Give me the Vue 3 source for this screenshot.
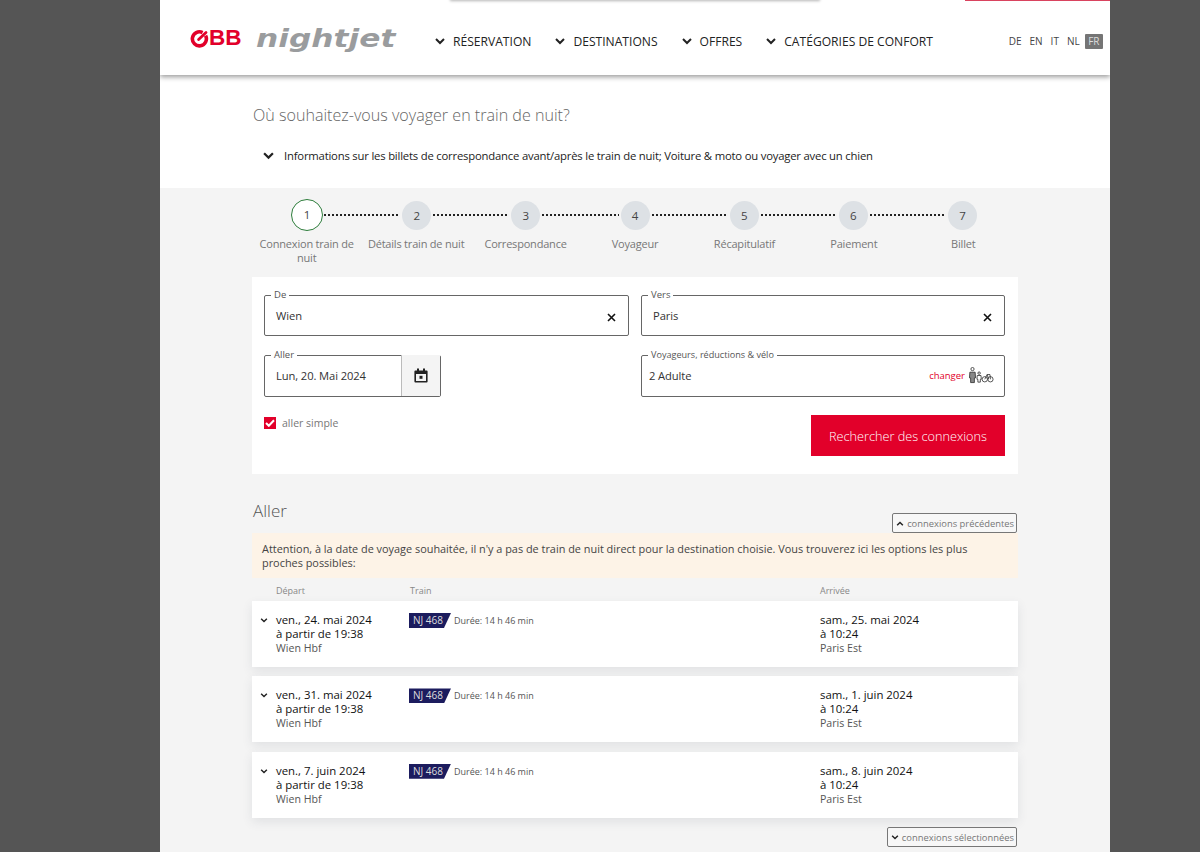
<template>
  <div class="page">
    <div class="top-sliver-grey"></div>
    <div class="top-sliver-red"></div>
    <header class="header">
      <div class="logo-obb">
        <svg width="19" height="19" viewBox="0 0 19 19">
          <path d="M12.6 3.6A7 7 0 1 0 15.6 6.6" fill="none" stroke="#e2002a" stroke-width="3.6" />
          <path d="M8.6 10.6 L16 3.4" stroke="#e2002a" stroke-width="2.8" stroke-linecap="round" />
        </svg>
        <span>BB</span>
      </div>
      <div class="logo-nightjet"><span>nightjet</span></div>
      <nav class="nav">
        <a v-for="item in navItems" :key="item" class="nav-item">
          <svg class="chev" width="10" height="7" viewBox="0 0 10 7"><path d="M1 1l4 4 4-4" /></svg>
          {{ item }}
        </a>
      </nav>
      <div class="langs">
        <span v-for="l in langs" :key="l" class="lang" :class="{ active: l === 'FR' }">{{ l }}</span>
      </div>
    </header>

    <section class="intro">
      <h2 class="intro-title">Où souhaitez-vous voyager en train de nuit?</h2>
      <div class="intro-info">
        <svg class="chev" width="11" height="8" viewBox="0 0 10 7"><path d="M1 1l4 4 4-4" /></svg>
        <span>Informations sur les billets de correspondance avant/après le train de nuit; Voiture &amp; moto ou voyager avec un chien</span>
      </div>
    </section>

    <main class="content">
      <div class="stepper">
        <div class="step-track">
          <template v-for="(step, i) in steps" :key="step">
            <span class="circle" :class="{ current: i === 0 }">{{ i + 1 }}</span>
            <span v-if="i < steps.length - 1" class="dots"></span>
          </template>
        </div>
        <div class="step-labels">
          <div v-for="step in steps" :key="step" class="step-label">{{ step }}</div>
        </div>
      </div>

      <form class="search" @submit.prevent>
        <div class="search-row">
          <fieldset class="field wide">
            <legend>De</legend>
            <span class="value">Wien</span>
            <svg class="x" width="9" height="9" viewBox="0 0 9 9"><path d="M1 1l7 7M8 1L1 8" /></svg>
          </fieldset>
          <fieldset class="field wide">
            <legend>Vers</legend>
            <span class="value">Paris</span>
            <svg class="x" width="9" height="9" viewBox="0 0 9 9"><path d="M1 1l7 7M8 1L1 8" /></svg>
          </fieldset>
        </div>
        <div class="search-row second">
          <fieldset class="field date">
            <legend>Aller</legend>
            <span class="value">Lun, 20. Mai 2024</span>
            <span class="cal">
              <svg width="14" height="15" viewBox="0 0 14 15">
                <path d="M3 0.5h2v2h4v-2h2v2h1.6a1 1 0 0 1 1 1v10a1 1 0 0 1-1 1H1.4a1 1 0 0 1-1-1v-10a1 1 0 0 1 1-1H3z M2 6v7h10V6z" fill="#222" fill-rule="evenodd" />
                <rect x="5.5" y="7.8" width="3" height="3" fill="#222" />
              </svg>
            </span>
          </fieldset>
          <fieldset class="field wide travellers">
            <legend>Voyageurs, réductions &amp; vélo</legend>
            <span class="value">2 Adulte</span>
            <span class="change">changer</span>
            <svg class="people" width="26" height="17" viewBox="0 0 26 18" fill="none" stroke="#222" stroke-width="0.8">
              <circle cx="4" cy="2.2" r="1.7" />
              <path d="M1.2 5.5h5.6l.4 6H6v5H2v-5H.8z" fill="#888" />
              <circle cx="11" cy="6.5" r="1.3" />
              <path d="M9 9h4l.3 4h-1v3h-2.600v-3h-1z" />
              <circle cx="17" cy="13" r="2.800" />
              <circle cx="23" cy="13" r="2.800" />
              <path d="M17 13l2.500-5h3l.5 5M19.500 8l1.500 5" />
            </svg>
          </fieldset>
        </div>
        <div class="search-bottom">
          <label class="oneway">
            <span class="checkbox">
              <svg width="10" height="8" viewBox="0 0 10 8"><path d="M1 4l2.800 2.800L9 1.200" fill="none" stroke="#fff" stroke-width="2" /></svg>
            </span>
            aller simple
          </label>
          <button class="search-btn" type="submit">Rechercher des connexions</button>
        </div>
      </form>

      <div class="results-head">
        <h3>Aller</h3>
        <button class="more-btn" type="button">
          <svg class="chev" width="8" height="5" viewBox="0 0 10 7"><path d="M1 6l4-4 4 4" /></svg>
          connexions précédentes
        </button>
      </div>
      <div class="notice">
        Attention, à la date de voyage souhaitée, il n'y a pas de train de nuit direct pour la destination choisie. Vous trouverez ici les options les plus proches possibles:
      </div>

      <div class="cols cols-head">
        <span></span>
        <span>Départ</span>
        <span>Train</span>
        <span>Arrivée</span>
      </div>
      <div v-for="c in connections" :key="c.dep" class="cols conn">
        <svg class="chev conn-chev" width="8" height="5" viewBox="0 0 10 7"><path d="M1 1l4 4 4-4" /></svg>
        <div class="times">
          <div>{{ c.dep }}</div>
          <div>à partir de 19:38</div>
          <div class="station">Wien Hbf</div>
        </div>
        <div class="train">
          <span class="badge">NJ 468</span>
          <span class="duration">Durée: 14 h 46 min</span>
        </div>
        <div class="times">
          <div>{{ c.arr }}</div>
          <div>à 10:24</div>
          <div class="station">Paris Est</div>
        </div>
      </div>

      <div class="foot">
        <button class="more-btn" type="button">
          <svg class="chev" width="8" height="5" viewBox="0 0 10 7"><path d="M1 1l4 4 4-4" /></svg>
          connexions sélectionnées
        </button>
      </div>
    </main>
  </div>
</template>

<script setup>
const navItems = ["RÉSERVATION", "DESTINATIONS", "OFFRES", "CATÉGORIES DE CONFORT"];
const langs = ["DE", "EN", "IT", "NL", "FR"];
const steps = [
  "Connexion train de nuit",
  "Détails train de nuit",
  "Correspondance",
  "Voyageur",
  "Récapitulatif",
  "Paiement",
  "Billet",
];
const connections = [
  { dep: "ven., 24. mai 2024", arr: "sam., 25. mai 2024" },
  { dep: "ven., 31. mai 2024", arr: "sam., 1. juin 2024" },
  { dep: "ven., 7. juin 2024", arr: "sam., 8. juin 2024" },
];
</script>

<style>
html, body {
  background: #555;
  overflow: hidden;
}
</style>

<style scoped>
.page {
  position: relative;
  width: 950px;
  height: 852px;
  margin-left: 160px;
  background: #fff;
  font-family: "Open Sans", "Liberation Sans", sans-serif;
  color: #222;
  overflow: hidden;
}

.top-sliver-grey {
  position: absolute;
  top: -3px;
  left: 290px;
  width: 370px;
  height: 3px;
  box-shadow: 0 1px 3px rgba(0, 0, 0, 0.3);
  z-index: 3;
}

.top-sliver-red {
  position: absolute;
  top: 0;
  left: 805px;
  right: 0;
  height: 1px;
  background: #d9435f;
  z-index: 3;
}

.header {
  position: relative;
  z-index: 2;
  display: flex;
  align-items: center;
  height: 75px;
  padding: 8px 7px 0 30px;
  background: #fff;
  box-shadow: 0 2px 5px rgba(0, 0, 0, 0.4);
  box-sizing: border-box;
}

.logo-obb {
  display: flex;
  align-items: center;
  width: 68px;
  margin-top: -6px;
  color: #e2002a;
  font-family: "Liberation Sans", sans-serif;
  font-weight: 700;
  font-size: 22.5px;
  line-height: 1;
}

.logo-nightjet {
  width: 179px;
  margin: -6px 0 0 -2px;
  font-family: "DejaVu Sans", sans-serif;
  font-weight: 700;
  font-style: italic;
  font-size: 25px;
  line-height: 1;
  color: #9a9c9e;
}

.logo-nightjet span {
  display: inline-block;
  transform: scaleX(1.25);
  transform-origin: left center;
}

.nav {
  display: flex;
  flex: 1;
}

.nav-item {
  display: flex;
  align-items: center;
  gap: 8px;
  margin-right: 24px;
  font-size: 12.1px;
  color: #222;
}

.chev path {
  fill: none;
  stroke: #222;
  stroke-width: 2;
}

.langs {
  display: flex;
  align-items: center;
  font-size: 10px;
  color: #444;
}

.lang {
  padding: 0 4px;
  line-height: 15px;
}

.lang.active {
  padding: 0 3.5px;
  margin-left: 1px;
  background: #757575;
  color: #ddd;
  border-radius: 1px;
}

.intro {
  height: 113px;
  padding: 30px 0 0 93px;
  box-sizing: border-box;
}

.intro-title {
  margin: 0;
  font-size: 16.1px;
  line-height: 20px;
  font-weight: 300;
  color: #666;
}

.intro-info {
  display: flex;
  align-items: center;
  gap: 10px;
  margin-top: 20px;
  margin-left: 10px;
  font-size: 11.3px;
  letter-spacing: -0.2px;
  line-height: 22px;
}

.content {
  height: 664px;
  padding: 0 92px;
  background: #f4f4f4;
}

.stepper {
  height: 89px;
  padding-top: 11px;
  box-sizing: border-box;
}

.step-track {
  display: flex;
  align-items: center;
  height: 32px;
  padding: 0 41px 0 39px;
}

.dots {
  flex: 1;
  height: 2px;
  margin: 0 2px;
  background: repeating-linear-gradient(90deg, #222 0 2px, transparent 2px 4px);
}

.circle {
  flex: none;
  width: 29px;
  height: 29px;
  border-radius: 50%;
  background: #dde1e5;
  font-size: 11.5px;
  line-height: 29px;
  text-align: center;
  color: #444;
}

.circle.current {
  width: 32px;
  height: 32px;
  margin-right: -1px;
  background: #fff;
  border: 1.5px solid #2e7d3c;
  box-sizing: border-box;
}

.step-labels {
  display: grid;
  grid-template-columns: repeat(7, 1fr);
  margin-top: 6px;
}

.step-label {
  padding: 0 2px;
  font-size: 11px;
  letter-spacing: -0.2px;
  line-height: 14px;
  text-align: center;
  color: #777;
}

.search {
  height: 197px;
  padding: 12px 13px 12px 12px;
  background: #fff;
  box-sizing: border-box;
}

.search-row {
  display: flex;
  gap: 12px;
}

.search-row.second {
  justify-content: space-between;
  margin-top: 13px;
}

.field {
  display: flex;
  align-items: center;
  margin: 0;
  min-width: 0;
  height: 47px;
  padding: 0 11px;
  border: 1px solid #666;
  border-radius: 2px;
  box-sizing: border-box;
}

.second .field {
  height: 48px;
}

.field legend {
  padding: 0 3px;
  margin-left: -5px;
  font-size: 9.5px;
  line-height: 12px;
  color: #555;
}

.field.wide {
  width: 365px;
}

.search-row .field.wide:last-child {
  width: 364px;
}

.search-row .travellers {
  padding-left: 7px;
  padding-right: 10px;
}

.travellers legend {
  margin-left: -1px;
  font-size: 9.1px;
}

.value {
  flex: 1;
  margin-top: -6px;
  font-size: 11.2px;
  letter-spacing: -0.1px;
  color: #333;
}

.x {
  margin: -2px 1px 0 0;
}

.x path {
  fill: none;
  stroke: #111;
  stroke-width: 1.6;
}

.field.date {
  width: 177px;
  padding-right: 0;
}

.cal {
  display: flex;
  align-items: center;
  justify-content: center;
  align-self: stretch;
  width: 38px;
  margin-top: -6px;
  background: #f4f4f4;
  border-left: 1px solid #bbb;
}

.change {
  margin-right: 3px;
  margin-top: -7px;
  font-size: 9.5px;
  color: #e2002a;
}

.people {
  margin-top: -7px;
}

.search-bottom {
  display: flex;
  justify-content: space-between;
  margin-top: 18px;
}

.oneway {
  display: flex;
  align-items: center;
  gap: 6px;
  height: 16px;
  font-size: 10.5px;
  color: #777;
}

.checkbox {
  display: flex;
  align-items: center;
  justify-content: center;
  width: 12px;
  height: 12px;
  background: #e2002a;
}

.search-btn {
  width: 194px;
  height: 41px;
  border: 0;
  background: #e2002a;
  color: #fff;
  font-family: inherit;
  font-size: 12.7px;
  font-weight: 300;
}

.results-head {
  display: flex;
  justify-content: space-between;
  align-items: flex-end;
  height: 59px;
  padding-right: 1px;
}

.results-head h3 {
  margin: 0 0 11px 1px;
  font-size: 17px;
  line-height: 22px;
  font-weight: 300;
  color: #555;
}

.more-btn {
  display: flex;
  align-items: center;
  gap: 3px;
  height: 20px;
  padding: 0 2px 0 3px;
  border: 1px solid #777;
  border-radius: 2px;
  background: #f7f7f7;
  font-family: inherit;
  font-size: 9.4px;
  color: #777;
}

.notice {
  height: 45px;
  padding: 9px 9px 0 10px;
  background: #fdf3e7;
  box-sizing: border-box;
  font-size: 10.9px;
  line-height: 14px;
  color: #444;
}

.cols {
  display: grid;
  grid-template-columns: 24px 134px 410px 1fr;
  width: 766px;
}

.cols-head {
  height: 23px;
  padding-top: 2px;
  box-sizing: border-box;
  align-items: center;
  font-size: 9px;
  color: #888;
}

.conn {
  height: 66px;
  margin-bottom: 9.4px;
  padding-top: 12px;
  background: #fff;
  box-sizing: border-box;
  box-shadow: 0 4px 10px rgba(60, 70, 90, 0.1);
}

.conn-chev {
  margin: 5px 0 0 8px;
}

.times {
  font-size: 11.400px;
  line-height: 14px;
  color: #111;
}

.station {
  font-size: 10.600px;
  color: #555;
}

.train {
  display: flex;
  align-items: flex-start;
  gap: 3px;
  margin-left: -1px;
}

.badge {
  height: 15px;
  padding: 0 8px 0 4px;
  background: #1c1c5e;
  clip-path: polygon(0 0, 100% 0, calc(100% - 7px) 100%, 0 100%);
  font-size: 10px;
  line-height: 15px;
  color: #ddd;
}

.duration {
  font-size: 9px;
  line-height: 16px;
  color: #555;
}

.foot {
  display: flex;
  justify-content: flex-end;
  margin-top: 3.5px;
  padding-right: 1px;
}
</style>
